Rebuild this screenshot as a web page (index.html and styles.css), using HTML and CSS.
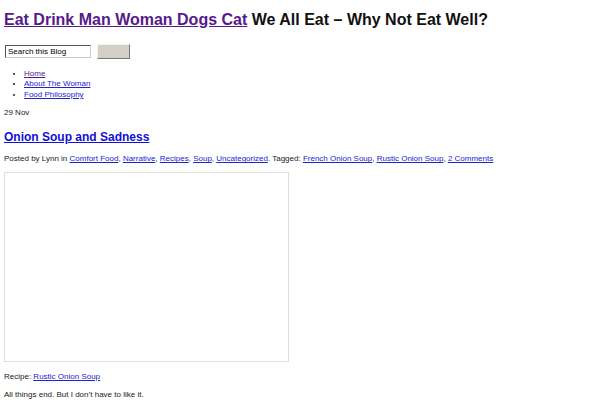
FILE: index.html
```html
<!DOCTYPE html>
<html lang="en">
<head>
<meta charset="UTF-8" />
<title>Eat Drink Man Woman Dogs Cat</title>
<link rel="stylesheet" href="styles.css">
</head>
<body>
<div class="header">
  <h1 class="site-title"><a href="#">Eat Drink Man Woman Dogs Cat</a> We All Eat &ndash; Why Not Eat Well?</h1>
  <form class="search">
    <input type="text" value="Search this Blog" />
    <button type="button"></button>
  </form>
  <ul class="nav">
    <li><a class="visited" href="#">Home</a></li>
    <li><a href="#">About The Woman</a></li>
    <li><a href="#">Food Philosophy</a></li>
  </ul>
</div>

<div class="post">
  <p class="date">29 Nov</p>
  <h2 class="post-title"><a href="#">Onion Soup and Sadness</a></h2>
  <p class="meta">Posted by Lynn in <a href="#">Comfort Food</a>, <a href="#">Narrative</a>, <a href="#">Recipes</a>, <a href="#">Soup</a>, <a href="#">Uncategorized</a>. Tagged: <a href="#">French Onion Soup</a>, <a href="#">Rustic Onion Soup</a>, <a href="#">2 Comments</a></p>
  <div class="photo"></div>
  <p class="recipe">Recipe: <a href="#">Rustic Onion Soup</a></p>
  <p class="body-text">All things end. But I don&rsquo;t have to like it.</p>
</div>
</body>
</html>
```

FILE: styles.css
```css
body {
  margin: 0;
  padding: 0 4px;
  background: #fff;
  color: #222;
  font-family: "Liberation Sans", Arial, sans-serif;
  font-size: 8px;
  line-height: 1.3;
}
a {
  color: #2323d0;
}
a.visited {
  color: #551a8b;
}
.site-title {
  margin: 10px 0 0;
  font-size: 16px;
  font-weight: 700;
  color: #111;
}
.site-title a {
  color: #551a8b;
}
.search {
  display: flex;
  align-items: center;
  gap: 6px;
  margin: 13px 0 0 1px;
}
.search input {
  width: 86px;
  height: 13px;
  box-sizing: border-box;
  margin: 0;
  padding: 0 2px;
  border: 1px solid #555;
  border-color: #555 #ccc #ccc #555;
  font-family: inherit;
  font-size: 8px;
  color: #000;
}
.search button {
  width: 33px;
  height: 15px;
  margin: 0;
  background: #d4d0c8;
  border: 1px solid;
  border-color: #f4f4f0 #777 #777 #f4f4f0;
}
.nav {
  margin: 10px 0 0;
  padding-left: 20px;
  line-height: 10.5px;
}
.post p {
  margin: 0;
}
.post .date {
  margin-top: 8px;
}
.post-title {
  margin: 11px 0 0;
  font-size: 12px;
}
.post-title a {
  color: #1010d8;
}
.post .meta {
  margin-top: 9px;
}
.photo {
  width: 285px;
  height: 190px;
  box-sizing: border-box;
  margin-top: 7px;
  border: 1px solid #ddd;
}
.post .recipe {
  margin-top: 10px;
}
.post .body-text {
  margin-top: 8px;
}
```
